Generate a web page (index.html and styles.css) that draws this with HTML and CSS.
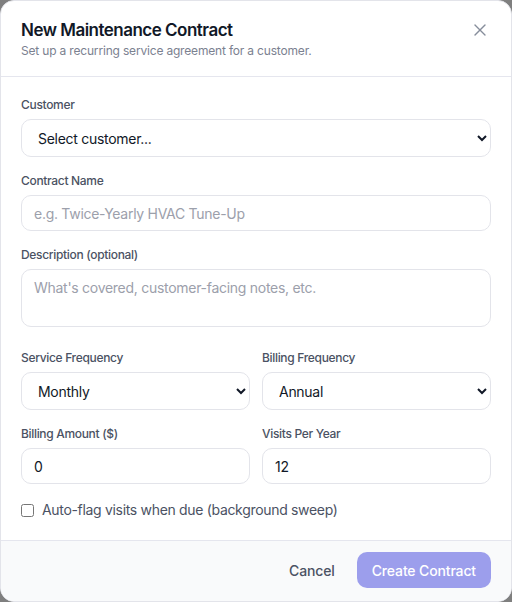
FILE: index.html
```html
<!DOCTYPE html>
<html lang="en">
<head>
<meta charset="utf-8">
<title>New Maintenance Contract</title>
<link rel="stylesheet" href="styles.css">
</head>
<body>
<div class="modal">
  <header class="modal-header">
    <div class="heading">
      <h2 class="title">New Maintenance Contract</h2>
      <p class="subtitle">Set up a recurring service agreement for a customer.</p>
    </div>
    <button class="close" type="button" aria-label="Close">
      <svg width="20" height="20" viewBox="0 0 24 24" fill="none" stroke="currentColor" stroke-width="1.6" stroke-linecap="round" stroke-linejoin="round"><path d="M18 6 6 18"/><path d="m6 6 12 12"/></svg>
    </button>
  </header>
  <div class="modal-body">
    <div class="field">
      <label class="label">Customer</label>
      <select class="control select"><option>Select customer...</option></select>
    </div>
    <div class="field">
      <label class="label">Contract Name</label>
      <input class="control input" type="text" placeholder="e.g. Twice-Yearly HVAC Tune-Up">
    </div>
    <div class="field field-desc">
      <label class="label">Description (optional)</label>
      <textarea class="control textarea" placeholder="What's covered, customer-facing notes, etc."></textarea>
    </div>
    <div class="grid">
      <div class="field">
        <label class="label">Service Frequency</label>
        <select class="control select"><option>Monthly</option></select>
      </div>
      <div class="field">
        <label class="label">Billing Frequency</label>
        <select class="control select"><option>Annual</option></select>
      </div>
      <div class="field">
        <label class="label">Billing Amount ($)</label>
        <input class="control input" type="text" value="0">
      </div>
      <div class="field">
        <label class="label">Visits Per Year</label>
        <input class="control input" type="text" value="12">
      </div>
    </div>
    <label class="check-row">
      <input type="checkbox" class="checkbox">
      <span>Auto-flag visits when due (background sweep)</span>
    </label>
  </div>
  <footer class="modal-footer">
    <button class="btn-cancel" type="button">Cancel</button>
    <button class="btn-primary" type="button">Create Contract</button>
  </footer>
</div>
</body>
</html>
```
FILE: styles.css
```css
* { box-sizing: border-box; }
html, body { margin: 0; padding: 0; }
body {
  background: #7f7f7f;
  font-family: Inter, "Noto Sans", sans-serif;
  letter-spacing: -0.02em;
  width: 512px;
  height: 602px;
  overflow: hidden;
}
.modal {
  width: 512px;
  height: 602px;
  background: #ffffff;
  border: 1px solid #e3e4ea;
  border-radius: 14px;
  overflow: hidden;
  display: flex;
  flex-direction: column;
}
.modal-header {
  display: flex;
  justify-content: space-between;
  align-items: flex-start;
  padding: 17px 20px 0 20px;
  height: 76px;
  border-bottom: 1px solid #e5e6ee;
}
.title {
  margin: 0;
  font-size: 17px;
  line-height: 24px;
  font-weight: 600;
  letter-spacing: -0.03em;
  color: #111827;
}
.subtitle {
  margin: 1px 0 0 0;
  font-size: 12px;
  line-height: 16px;
  letter-spacing: -0.015em;
  color: #7b8190;
}
.close {
  border: 0;
  background: none;
  padding: 0;
  margin-top: 2px;
  margin-right: 1px;
  width: 20px;
  height: 20px;
  color: #868d9b;
  display: flex;
  align-items: center;
  justify-content: center;
}
.modal-body {
  flex: 1;
  padding: 20px 20px 0 20px;
  display: flex;
  flex-direction: column;
}
.field {
  display: flex;
  flex-direction: column;
  margin-bottom: 16px;
}
.field-desc { margin-bottom: 23px; }
.label {
  font-size: 12px;
  line-height: 16px;
  font-weight: 500;
  color: #4b5263;
  margin-bottom: 6px;
}
.control {
  font-family: Inter, "Noto Sans", sans-serif;
  font-size: 14px;
  letter-spacing: -0.02em;
  width: 100%;
  border: 1px solid #e3e4ea;
  border-radius: 10px;
  background: #ffffff;
  color: #111827;
  outline: none;
}
.select {
  height: 38px;
  padding: 0 12px;
}
.input {
  height: 36px;
  padding: 0 12px;
}
.textarea {
  display: block;
  height: 58px;
  padding: 8px 12px;
  resize: none;
  line-height: 20px;
}
.control::placeholder { color: #9ca0ab; }
.grid {
  display: grid;
  grid-template-columns: 1fr 1fr;
  column-gap: 12px;
}
.grid .field:nth-child(3), .grid .field:nth-child(4) { margin-bottom: 16px; }
.check-row {
  display: flex;
  align-items: center;
  gap: 8px;
  font-size: 14px;
  line-height: 20px;
  color: #4b5263;
  margin-top: 0;
}
.checkbox {
  margin: 0;
  width: 13px;
  height: 13px;
}
.modal-footer {
  height: 61px;
  background: #f9fafb;
  border-top: 1px solid #e5e6ee;
  display: flex;
  justify-content: flex-end;
  align-items: flex-start;
  gap: 6px;
  padding: 11px 20px 0 20px;
}
.btn-cancel {
  font-family: Inter, "Noto Sans", sans-serif;
  font-size: 14px;
  font-weight: 500;
  letter-spacing: -0.01em;
  color: #4b5263;
  background: none;
  border: 0;
  height: 36px;
  padding: 0 16px;
}
.btn-primary {
  font-family: Inter, "Noto Sans", sans-serif;
  font-size: 14px;
  font-weight: 500;
  letter-spacing: -0.01em;
  color: #ffffff;
  background: #9c9eec;
  border: 0;
  border-radius: 10px;
  height: 36px;
  padding: 0 15px;
}
```
